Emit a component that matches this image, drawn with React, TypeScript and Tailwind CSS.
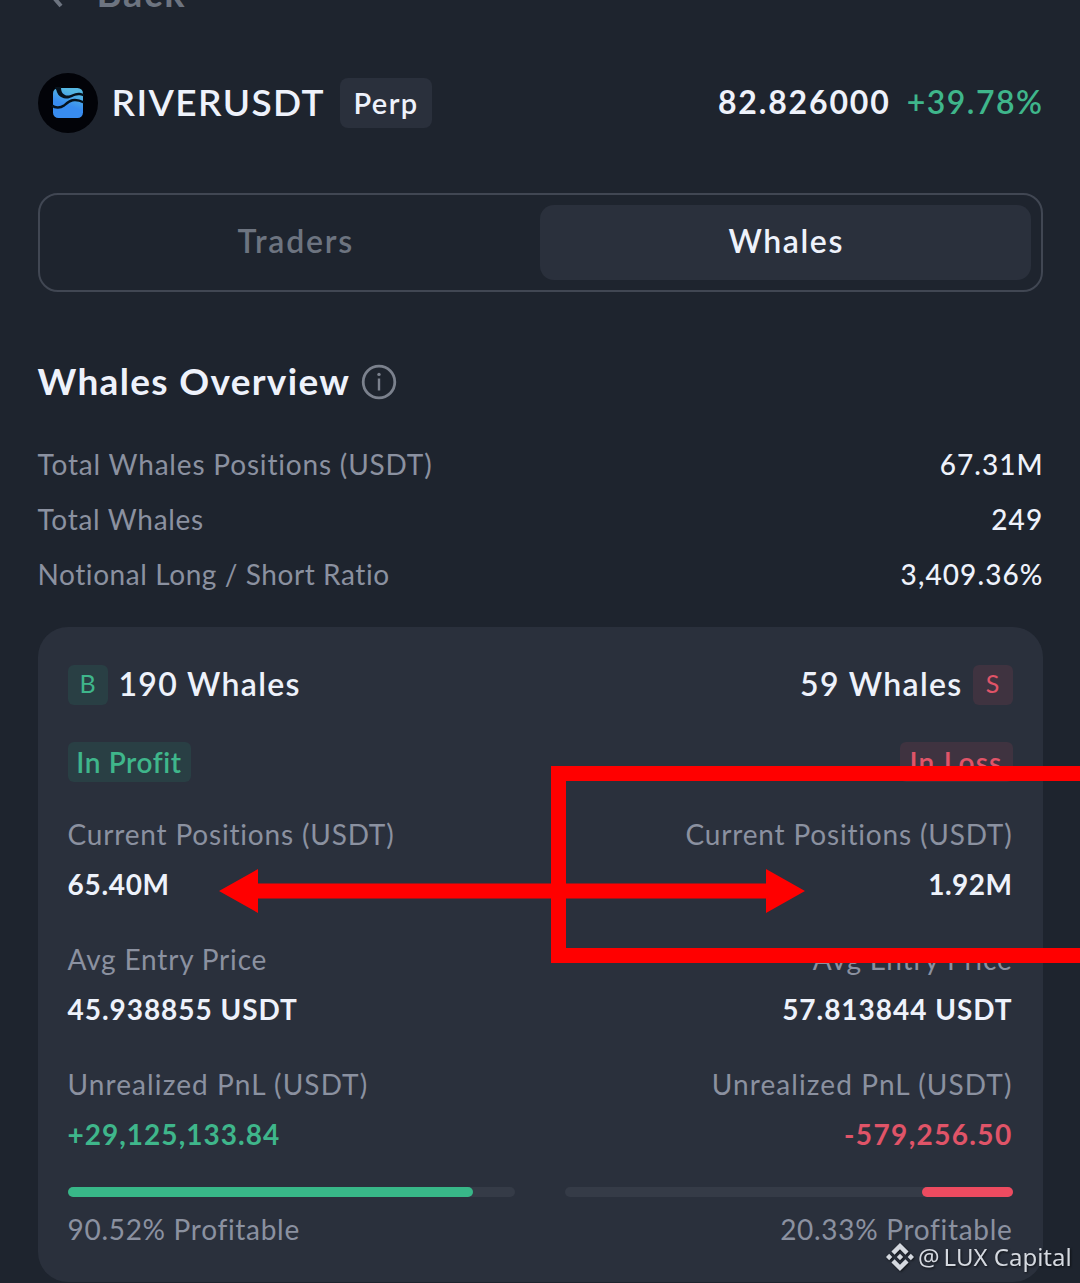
import React from 'react'
import { clsx } from 'clsx'
import { SiBinance } from 'react-icons/si'

type StatProps = {
  label: string
  value: string
  labelTracking: string
  valueClass: string
}

type SideProps = {
  right?: boolean
  letter: string
  count: string
  status: string
  stats: StatProps[]
  profitable: string
  percent: number
}

const overview = [
  {
    label: 'Total Whales Positions (USDT)',
    value: '67.31M',
    labelTracking: 'tracking-[0.82px]',
    valueTracking: 'tracking-[1px]',
  },
  {
    label: 'Total Whales',
    value: '249',
    labelTracking: 'tracking-[0.7px]',
    valueTracking: 'tracking-[1.2px]',
  },
  {
    label: 'Notional Long / Short Ratio',
    value: '3,409.36%',
    labelTracking: 'tracking-[0.58px]',
    valueTracking: 'tracking-[1.1px]',
  },
]

const longStats: StatProps[] = [
  {
    label: 'Current Positions (USDT)',
    value: '65.40M',
    labelTracking: 'tracking-[0.82px]',
    valueClass: 'text-[#eef2fb] tracking-[0.7px]',
  },
  {
    label: 'Avg Entry Price',
    value: '45.938855 USDT',
    labelTracking: 'tracking-[0.82px]',
    valueClass: 'text-[#eef2fb] tracking-[0.96px]',
  },
  {
    label: 'Unrealized PnL (USDT)',
    value: '+29,125,133.84',
    labelTracking: 'tracking-[1.1px]',
    valueClass: 'text-[#3fb68b] tracking-[1.02px]',
  },
]

const shortStats: StatProps[] = [
  {
    label: 'Current Positions (USDT)',
    value: '1.92M',
    labelTracking: 'tracking-[0.82px]',
    valueClass: 'text-[#eef2fb] tracking-[0.5px]',
  },
  {
    label: 'Avg Entry Price',
    value: '57.813844 USDT',
    labelTracking: 'tracking-[0.82px]',
    valueClass: 'text-[#eef2fb] tracking-[0.96px]',
  },
  {
    label: 'Unrealized PnL (USDT)',
    value: '-579,256.50',
    labelTracking: 'tracking-[1.1px]',
    valueClass: 'text-[#e05468] tracking-[1.35px]',
  },
]

const RiverLogo: React.FC = () => (
  <svg viewBox="0 0 60 60" className="size-[60px] shrink-0">
    <defs>
      <linearGradient id="river" x1="0.75" y1="0" x2="0.4" y2="1">
        <stop offset="0.15" stopColor="#55b7e2" />
        <stop offset="0.6" stopColor="#388cf0" />
      </linearGradient>
    </defs>
    <circle cx="30" cy="30" r="30" fill="#020308" />
    <rect x="15" y="15" width="30" height="30" rx="5.5" fill="url(#river)" />
    <path d="M17 14h6c0 4 1 7 5 8.500c6 1 9-5.500 18-1.500v2.500c-9-4-12 2.500-18 2c-6-.5-8.500-4-9.500-8z" fill="#06121c" />
    <path
      d="M14 32.500c3 2.500 8 3 12 0c5-4 9-8.500 20-3"
      fill="none"
      stroke="#06121c"
      strokeWidth="2.4"
    />
  </svg>
)

const Stat: React.FC<StatProps> = ({ label, value, labelTracking, valueClass }) => (
  <div className="mb-[25px]">
    <div className={clsx('h-[50px] leading-[50px] text-[#8b91a0]', labelTracking)}>{label}</div>
    <div className={clsx('h-[50px] leading-[50px] font-bold', valueClass)}>{value}</div>
  </div>
)

const Side: React.FC<SideProps> = ({ right, letter, count, status, stats, profitable, percent }) => {
  const tint = right ? 'bg-[#3f3340] text-[#e05468]' : 'bg-[#293f44] text-[#3fb68b]'
  return (
    <div className={clsx('flex flex-col whitespace-nowrap', right ? 'items-end text-right' : 'items-start')}>
      <div className={clsx('flex h-10 items-center', right ? 'flex-row-reverse gap-[10px]' : 'gap-[11px]')}>
        <span
          className={clsx(
            'flex size-10 items-center justify-center rounded-md pb-[3px] text-[25px] leading-none',
            tint,
          )}
        >
          {letter}
        </span>
        <span className="-mt-[3px] text-[32px] leading-10 font-semibold tracking-[1.3px] text-[#eef2fb]">
          {count}
        </span>
      </div>
      <div
        className={clsx(
          'mt-[37px] mb-[27px] flex h-10 items-center justify-center rounded-md leading-10 font-semibold',
          right ? 'w-[113px] tracking-[1.2px]' : 'w-[123px] tracking-[0.6px]',
          tint,
        )}
      >
        {status}
      </div>
      {stats.map((stat) => (
        <Stat key={stat.label} {...stat} />
      ))}
      <div
        className={clsx(
          'mt-[3px] flex h-[10px] w-full rounded-full bg-[#353b47]',
          right && 'justify-end',
        )}
      >
        <div
          className={clsx('h-full rounded-full', right ? 'bg-[#ed4b60]' : 'bg-[#38b788]')}
          style={{ width: `${percent}%` }}
        />
      </div>
      <div className="mt-[7px] h-[50px] leading-[50px] tracking-[0.7px] text-[#8b91a0]">
        {profitable}
      </div>
    </div>
  )
}

const App: React.FC = () => {
  return (
    <div className="relative flex h-[1283px] w-[1080px] flex-col overflow-hidden bg-[#1e242e] px-[37.5px] font-['Lato',sans-serif] text-[28px] text-[#eef2fb]">
      <div className="-mt-[31px] flex h-[46px] items-center text-[38px] font-bold text-[#6d7480]">
        <svg viewBox="0 0 24 36" className="ml-[7px] h-9 w-6" fill="none" stroke="currentColor" strokeWidth="4">
          <path d="M18 4L4 18l12 14" />
        </svg>
        <span className="ml-[28px] tracking-[1.8px]">Back</span>
      </div>

      <div className="mt-[58px] flex h-[60px] items-center whitespace-nowrap">
        <RiverLogo />
        <span className="-mt-0.5 ml-[14px] w-[214px] text-[37px] font-semibold tracking-[1.4px]">RIVERUSDT</span>
        <span className="ml-[14px] flex h-[50px] w-[92px] items-center justify-center rounded-lg bg-[#2a303c] pl-px text-[29px] font-semibold tracking-[1.4px]">
          Perp
        </span>
        <span className="-mt-0.5 ml-auto text-[32px] font-bold tracking-[1.85px]">82.826000</span>
        <span className="-mt-0.5 -mr-px ml-4 text-[32px] font-semibold tracking-[1.5px] text-[#3fb68b]">
          +39.78%
        </span>
      </div>

      <div className="mt-[60px] grid h-[99px] shrink-0 grid-cols-2 rounded-[20px] border-2 border-[#414753] p-[10px] text-[32px]">
        <button className="pb-[3px] pl-0.5 font-semibold tracking-[1.8px] text-[#6d7480]">Traders</button>
        <button className="rounded-[14px] bg-[#2a303c] pb-[3px] pl-0.5 font-semibold tracking-[1.6px]">
          Whales
        </button>
      </div>

      <div className="mt-[65px] flex h-[50px] items-center">
        <h1 className="-mt-0.5 text-[37px] font-bold tracking-[1.32px]">Whales Overview</h1>
        <svg
          viewBox="0 0 36 36"
          className="ml-[11px] size-9"
          fill="none"
          stroke="#7b818d"
          strokeWidth="2.8"
        >
          <circle cx="18" cy="18" r="15.8" />
          <path d="M18 14.500v12" strokeWidth="2.4" />
          <circle cx="18" cy="10.400" r="1.700" fill="#7b818d" stroke="none" />
        </svg>
      </div>

      <div className="mt-[29px]">
        {overview.map((row) => (
          <div key={row.label} className="-mr-px flex h-[55px] items-center justify-between">
            <span className={clsx('text-[#8b91a0]', row.labelTracking)}>{row.label}</span>
            <span className={clsx('font-medium', row.valueTracking)}>{row.value}</span>
          </div>
        ))}
      </div>

      <div className="mt-[26px] grid h-[655px] shrink-0 grid-cols-2 gap-[50px] rounded-[30px] bg-[#2a303c] px-[30px] pt-[38px]">
        <Side
          letter="B"
          count="190 Whales"
          status="In Profit"
          stats={longStats}
          profitable="90.52% Profitable"
          percent={90.52}
        />
        <Side
          right
          letter="S"
          count="59 Whales"
          status="In Loss"
          stats={shortStats}
          profitable="20.33% Profitable"
          percent={20.33}
        />
      </div>

      {/* red highlight drawn over the card */}
      <div className="absolute top-[766px] -right-5 left-[551px] h-[197px] border-[15.5px] border-[#ff0000]" />
      <svg
        viewBox="0 0 586 44"
        className="absolute top-[869px] left-[219px] h-11 w-[586px]"
        fill="#ff0000"
      >
        <path d="M0 22L39 0v14.500h508V0l39 22l-39 22V29.500H39V44z" />
      </svg>

      <div className="absolute top-[1239px] left-[886px] flex h-9 items-center font-['Noto_Sans',sans-serif] text-[24px] whitespace-nowrap text-[#d5d9e0] drop-shadow-[1px_1px_1px_rgba(0,0,0,0.6)]">
        <SiBinance className="size-7" />
        <span className="ml-1">@</span>
        <span className="ml-1">LUX Capital</span>
      </div>
    </div>
  )
}

export default App
